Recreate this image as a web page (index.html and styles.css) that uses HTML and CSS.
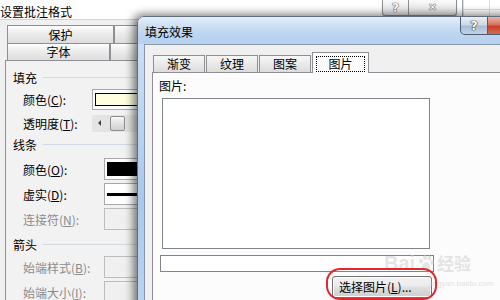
FILE: index.html
```html
<!DOCTYPE html>
<html lang="zh-CN">
<head>
<meta charset="utf-8">
<title>填充效果</title>
<link rel="stylesheet" href="styles.css">
</head>
<body>
<div class="desk">
  <div class="win back">
    <div class="back-title">
      <span class="back-title-text">设置批注格式</span>
      <div class="caption-btns">
        <span class="cbtn help">?</span><span class="cbtn close">✕</span>
      </div>
    </div>
    <div class="back-body">
      <div class="tabrow r1"><span class="tab t-a">保护</span><span class="tab t-rest"></span></div>
      <div class="tabrow r2"><span class="tab t-b">字体</span><span class="tab t-rest"></span></div>
      <div class="panel">
        <div class="grp"><span>填充</span><i class="rule"></i></div>
        <div class="row"><span class="lbl narrow">颜色(<u>C</u>):</span><span class="box"><i class="swatch yellow"></i></span></div>
        <div class="row slim"><span class="lbl narrow">透明度(<u>T</u>):</span><span class="slider"><i class="arrow"></i><i class="thumb"></i></span></div>
        <div class="grp g2"><span>线条</span><i class="rule"></i></div>
        <div class="row"><span class="lbl">颜色(<u>O</u>):</span><span class="box wide"><i class="swatch black"></i></span></div>
        <div class="row"><span class="lbl">虚实(<u>D</u>):</span><span class="box wide dash"><i class="line"></i></span></div>
        <div class="row"><span class="lbl off">连接符(<u>N</u>):</span><span class="box wide disabled"></span></div>
        <div class="grp g3"><span>箭头</span><i class="rule"></i></div>
        <div class="row"><span class="lbl off">始端样式(<u>B</u>):</span><span class="box wide disabled"></span></div>
        <div class="row"><span class="lbl off">始端大小(<u>I</u>):</span><span class="box wide disabled"></span></div>
      </div>
    </div>
  </div>

  <div class="win front">
    <div class="f-title">
      <span class="f-title-text">填充效果</span>
      <div class="f-caps"><span class="fc fhelp">?</span><span class="fc fclose"></span></div>
    </div>
    <div class="f-frame">
      <div class="f-body">
        <div class="ftabs">
          <span class="ftab">渐变</span>
          <span class="ftab">纹理</span>
          <span class="ftab">图案</span>
          <span class="ftab sel"><span class="focus">图片</span></span>
        </div>
        <div class="fpanel">
          <div class="plabel">图片:</div>
          <div class="picbox"></div>
          <div class="pathfield"></div>
          <div class="pbtn">选择图片(<u>L</u>)...</div>
        </div>
      </div>
    </div>
  </div>

  <div class="watermark">
    <span class="wm-bai">Bai</span><svg class="paw" width="18" height="18" viewBox="0 0 18 18"><ellipse cx="4" cy="7" rx="2" ry="2.6"/><ellipse cx="8" cy="3.5" rx="2" ry="2.6"/><ellipse cx="12.5" cy="4" rx="2" ry="2.6"/><ellipse cx="15" cy="8.5" rx="1.8" ry="2.4"/><path d="M9 8 C12 8 14 13 12.5 15.5 C11 17 7 17 5.5 15.5 C4 13 6 8 9 8Z"/></svg><span class="wm-jy">经验</span>
  </div>
  <div class="wm-url">jingyan.baidu.com</div>
  <div class="ring"></div>
</div>
</body>
</html>
```

FILE: styles.css
```css
* { box-sizing: border-box; }

html, body {
  margin: 0;
  padding: 0;
}

body {
  width: 500px;
  height: 300px;
  overflow: hidden;
  font-family: "Noto Sans CJK SC", "Liberation Sans", sans-serif;
  font-size: 12px;
  color: #000;
}

u { text-decoration: underline; text-underline-offset: 1px; }

.desk {
  position: relative;
  width: 500px;
  height: 300px;
  overflow: hidden;
  background-color: #fff;
  background-image:
    linear-gradient(90deg, transparent 0, transparent 23px, #dadfe8 23px, #dadfe8 24px, transparent 24px),
    linear-gradient(180deg, transparent 0, transparent 9px, #dadfe8 9px, #dadfe8 10px, transparent 10px);
  background-size: 26px 20px;
  background-position: 466px 0;
}

/* ---------- back window ---------- */
.win.back {
  position: absolute;
  left: 0;
  top: 0;
  width: 463px;
  height: 300px;
  display: flex;
  flex-direction: column;
  background: #fff;
  border-right: 1px solid #9da3ab;
}

.back-title {
  height: 27px;
  display: flex;
  align-items: flex-start;
  background: #fff;
}

.back-title-text {
  padding-top: 5px;
  line-height: 14px;
}

.caption-btns {
  margin-left: auto;
  margin-right: 5px;
  display: flex;
  box-shadow: 0 1px 1px rgba(0,0,0,.35);
  border-radius: 0 0 4px 4px;
}

.cbtn {
  height: 16px;
  display: flex;
  align-items: center;
  justify-content: center;
  border: 1px solid #8c8f94;
  border-top: none;
  background: linear-gradient(#fafafa, #ececec 50%, #e2e2e2);
  color: #fff;
  font-family: "DejaVu Sans", sans-serif;
  font-weight: bold;
  font-size: 12px;
  line-height: 1;
  text-shadow: 0 0 1px #555, 0 0 1px #555, 0 0 1px #555;
}

.cbtn.help { width: 27px; border-radius: 0 0 0 4px; }
.cbtn.close { width: 48px; border-left: none; border-radius: 0 0 4px 0; font-size: 11px; }

.back-body {
  flex: 1;
  background: #f0f0f0;
  border-top: 1px solid #cfd3d8;
  padding: 5px 0 0 5px;
  display: flex;
  flex-direction: column;
}

.tabrow {
  display: flex;
  padding-left: 2px;
}

.tabrow.r1 { height: 18px; }
.tabrow.r2 { height: 17px; }

.tab {
  display: flex;
  align-items: center;
  justify-content: center;
  border: 1px solid #8d8f94;
  border-bottom: none;
  background: linear-gradient(#fdfdfd, #ececec 45%, #dedede);
  line-height: 1;
}

.t-a { width: 107px; }
.t-b { width: 103px; }
.t-rest { flex: 1; }

.panel {
  flex: 1;
  background: #f2f2f2;
  border-top: 1px solid #8d8f94;
  border-left: 1px solid #8d8f94;
  padding: 8px 0 0 7px;
  display: flex;
  flex-direction: column;
  gap: 3px;
}

.grp {
  height: 16px;
  display: flex;
  align-items: center;
}

.grp.g2 { margin-bottom: 3px; }
.grp.g3 { margin-top: 3px; margin-bottom: 1px; }

.rule {
  flex: 1;
  height: 1px;
  margin-left: 6px;
  background: #d3dae2;
}

.row {
  height: 22px;
  display: flex;
  align-items: center;
  padding-left: 10px;
}

.row.slim { height: 20px; }

.lbl {
  width: 81px;
  flex: none;
  white-space: nowrap;
}

.lbl.narrow { width: 69px; }
.lbl.off { color: #8b8b8b; }

.box {
  width: 60px;
  height: 21px;
  border: 1px solid #a9a9a9;
  background: #fff;
  padding: 3px 0 3px 2px;
  display: flex;
}

.box.wide { height: 22px; }

.swatch {
  flex: 1;
  border: 1px solid #000;
}

.swatch.yellow { background: #ffffe0; }
.swatch.black { background: #000; }

.box.dash { align-items: center; }
.line { flex: 1; height: 3px; background: #000; }

.box.disabled {
  background: #f0f0f0;
  border-color: #bdbdbd;
}

.slider {
  width: 60px;
  height: 17px;
  background: #e4e4e4;
  display: flex;
  align-items: center;
}

.arrow {
  width: 0;
  height: 0;
  margin-left: 6px;
  border-top: 3px solid transparent;
  border-bottom: 3px solid transparent;
  border-right: 3px solid #444;
}

.thumb {
  width: 15px;
  height: 15px;
  margin-left: 9px;
  border: 1px solid #8e8e8e;
  border-radius: 2px;
  background: linear-gradient(#f8f8f8, #e2e2e2 50%, #d0d0d0);
}

/* ---------- front window ---------- */
.win.front {
  position: absolute;
  left: 137px;
  top: 16px;
  width: 400px;
  height: 300px;
  border: 1px solid #5f6d7d;
  border-radius: 7px 7px 0 0;
  background: linear-gradient(180deg, #cfe2f6 0, #b8d3f0 40%, #a9c8ec 60%, #bcd6f1 100%);
  box-shadow: -2px 0 9px 2px rgba(0,0,0,.5);
  display: flex;
  flex-direction: column;
}

.f-title {
  height: 27px;
  display: flex;
  align-items: flex-start;
  border-radius: 6px 6px 0 0;
  background: linear-gradient(180deg, #e4eef9 0, #cfe1f5 30%, #bcd5f1 60%, #b6d0ee 100%);
}

.f-title-text {
  padding: 7px 0 0 7px;
  line-height: 15px;
}

.f-caps {
  margin-left: auto;
  display: flex;
}

.fc {
  height: 18px;
  display: flex;
  align-items: center;
  justify-content: center;
  border: 1px solid #4f5d70;
  border-top: none;
}

.fhelp {
  width: 28px;
  border-radius: 0 0 0 5px;
  background: linear-gradient(#e9f0f8, #cbd8e7 45%, #a9bdd6 55%, #c2d3e6);
  color: #fff;
  font-family: "DejaVu Sans", sans-serif;
  font-weight: bold;
  font-size: 13px;
  line-height: 1;
  text-shadow: 0 0 1px #222, 0 0 1px #222, 0 0 1px #222;
}

.fclose {
  width: 48px;
  border-left: none;
  background: linear-gradient(#eab3a6, #d7735e 45%, #c5402a 55%, #d46a50);
}

.f-frame {
  flex: 1;
  padding-left: 6px;
  display: flex;
}

.f-body {
  flex: 1;
  background: #f0f0f0;
  border-top: 1px solid #8796a8;
  border-left: 1px solid #8796a8;
  padding: 7px 0 0 7px;
  display: flex;
  flex-direction: column;
}

.ftabs {
  height: 20px;
  display: flex;
  align-items: flex-end;
  gap: 1px;
  padding-left: 1px;
  position: relative;
  z-index: 1;
}

.ftab {
  width: 52px;
  height: 17px;
  display: flex;
  align-items: center;
  justify-content: center;
  border: 1px solid #8d8f94;
  border-bottom: none;
  background: linear-gradient(#f7f7f7, #ebebeb 45%, #dcdcdc);
  line-height: 1;
}

.ftab.sel {
  width: 57px;
  height: 21px;
  margin-bottom: -1px;
  background: #fcfcfc;
  padding: 3px 3px 2px;
}

.focus {
  flex: 1;
  height: 16px;
  border: 1px dotted #000;
  display: flex;
  align-items: center;
  justify-content: center;
}

.fpanel {
  flex: 1;
  background: #fcfcfc;
  border-top: 1px solid #8d8f94;
  border-left: 1px solid #8d8f94;
  padding: 7px 0 0 6px;
  display: flex;
  flex-direction: column;
  align-items: flex-start;
}

.plabel {
  height: 12px;
  line-height: 12px;
}

.picbox {
  margin: 6px 0 0 3px;
  width: 268px;
  height: 151px;
  border: 1px solid #7f838a;
  background: #fff;
}

.pathfield {
  margin: 6px 0 0 1px;
  width: 274px;
  height: 17px;
  border: 1px solid #7f838a;
  background: #fff;
}

.pbtn {
  margin: 4px 0 0 173px;
  width: 100px;
  height: 22px;
  border: 1px solid #707070;
  border-radius: 3px;
  background: linear-gradient(#f3f3f3, #ebebeb 45%, #dddddd 55%, #cfcfcf);
  box-shadow: inset 0 0 0 1px #fbfbfb;
  display: flex;
  align-items: center;
  padding-left: 6px;
  white-space: nowrap;
  line-height: 1;
}

/* ---------- overlays ---------- */
.watermark {
  position: absolute;
  left: 384px;
  top: 252px;
  display: flex;
  align-items: center;
  gap: 2px;
  color: rgba(205, 205, 205, 0.55);
  pointer-events: none;
}

.wm-bai {
  font-family: "Liberation Sans", sans-serif;
  font-weight: bold;
  font-size: 20px;
  line-height: 22px;
}

.paw { fill: rgba(205, 205, 205, 0.55); }

.wm-jy {
  font-size: 17px;
  line-height: 22px;
  font-weight: bold;
}

.wm-url {
  position: absolute;
  left: 429px;
  top: 279px;
  font-family: "Liberation Sans", sans-serif;
  font-size: 8px;
  line-height: 10px;
  color: rgba(205, 205, 205, 0.6);
  pointer-events: none;
}

.ring {
  position: absolute;
  left: 326px;
  top: 268px;
  width: 111px;
  height: 32px;
  border: 2px solid #e3262c;
  border-radius: 14px;
}
```
